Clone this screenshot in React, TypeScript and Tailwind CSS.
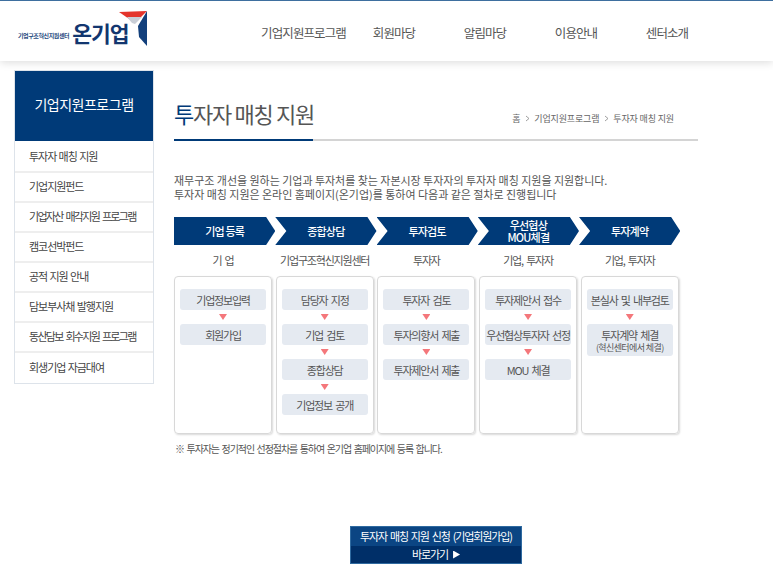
const font = "font-['Noto_Sans_CJK_KR','Liberation_Sans',sans-serif]";

const sideItems = [
  "투자자 매칭 지원",
  "기업지원펀드",
  "기업자산 매각지원 프로그램",
  "캠코선박펀드",
  "공적 지원 안내",
  "담보부사채 발행지원",
  "동산담보 회수지원 프로그램",
  "회생기업 자금대여",
];

const steps = [
  { title: ["기업 등록"], who: "기 업", items: [["기업정보입력"], ["회원가입"]] },
  { title: ["종합상담"], who: "기업구조혁신지원센터", items: [["담당자 지정"], ["기업 검토"], ["종합상담"], ["기업정보 공개"]] },
  { title: ["투자검토"], who: "투자자", items: [["투자자 검토"], ["투자의향서 제출"], ["투자제안서 제출"]] },
  { title: ["우선협상", "MOU체결"], who: "기업, 투자자", items: [["투자제안서 접수"], ["우선협상투자자 선정"], ["MOU 체결"]] },
  { title: ["투자계약"], who: "기업, 투자자", items: [["본실사 및 내부검토"], ["투자계약 체결", "(혁신센터에서 체결)"]] },
];

const Logo = () => (
  <div className="flex items-end ml-[18px] mt-[10px] w-[130px] h-[38px] relative">
    <span className="text-[6px] leading-[8px] font-bold text-[#1f4a80] tracking-[-0.4px] whitespace-nowrap mb-[9px]">기업구조혁신지원센터</span>
    <span className="text-[21.5px] leading-[30px] font-bold text-[#12366f] tracking-[-1px] whitespace-nowrap ml-[3px] mb-[1px]">온기업</span>
    <svg className="absolute left-[100px] top-0" width="30" height="36" viewBox="0 0 30 36">
      <path d="M1 1 L29 0 L17 12 Z" fill="#e4342b" />
      <path d="M9 6 L24 6 L17 13 L14 12 Z" fill="#c9ced6" />
      <path d="M29 0 L29 35 L21 26 L20 15 Z" fill="#13407c" />
    </svg>
  </div>
);

const Header = () => (
  <header className="h-[61px] border-t border-[#3e6f9f] shadow-[0_2px_8px_rgba(0,0,0,0.13)] flex bg-white">
    <Logo />
    <nav className="flex items-center text-[12.5px] text-[#555] tracking-[-0.9px] ml-[113px] pt-[4px]">
      <span className="w-[85px] text-center whitespace-nowrap">기업지원프로그램</span>
      <span className="w-[60px] ml-[18px] text-center">회원마당</span>
      <span className="w-[60px] ml-[31px] text-center">알림마당</span>
      <span className="w-[60px] ml-[31px] text-center">이용안내</span>
      <span className="w-[60px] ml-[31px] text-center">센터소개</span>
    </nav>
  </header>
);

const Sidebar = () => (
  <aside className="w-[140px] shrink-0 border border-[#dde3ea]">
    <div className="h-[70px] bg-[#003a78] text-white text-[14px] tracking-[-0.5px] flex items-center justify-center pb-[3px]">기업지원프로그램</div>
    <ul className="text-[11px] text-[#444] pt-[2px]">
      {sideItems.map((s, i) => (
        <li
          key={s}
          className={`h-[30px] pl-[14px] flex items-center whitespace-nowrap pb-[2px] ${s.length > 12 ? "tracking-[-1.7px] [word-spacing:2px]" : "tracking-[-1.05px] [word-spacing:1px]"} ${i < 7 ? "border-b-2 border-[#eeeeee]" : ""}`}
        >
          {s}
        </li>
      ))}
    </ul>
  </aside>
);

const Arrow = () => (
  <svg width="7" height="7" viewBox="0 0 7 7" fill="none" stroke="#888" strokeWidth="0.8">
    <path d="M2 1 L5 3.5 L2 6" />
  </svg>
);

const Card = ({ items }: { items: string[][] }) => (
  <div className="w-[98px] h-[158px] shrink-0 border border-[#d8d8d8] rounded-[4px] shadow-[1px_1px_2px_rgba(0,0,0,0.15)] px-[5px] pt-[12px]">
    {items.map((lines, i) => (
      <div key={lines[0]}>
        {i > 0 && (
          <div className="h-[14px] flex items-center justify-center">
            <div className="w-[8px] h-[6px] bg-[#f4777b] [clip-path:polygon(0_0,100%_0,50%_100%)]" />
          </div>
        )}
        <div className={`rounded-[3px] bg-[#e5eaf1] text-[#555] text-center flex flex-col items-center justify-center whitespace-nowrap ${lines.length > 1 ? "h-[32px]" : "h-[21px]"}`}>
          <span className="text-[11px] leading-[14px] tracking-[-1.2px] [word-spacing:2px]">{lines[0]}</span>
          {lines[1] && <span className="text-[9px] leading-[11px] tracking-[-0.6px]">{lines[1]}</span>}
        </div>
      </div>
    ))}
  </div>
);

export default function App() {
  return (
    <div className={`${font} bg-white h-[582px] overflow-hidden`}>
      <Header />
      <main className="flex items-start pl-[14px] pt-[9px]">
        <Sidebar />
        <section className="ml-[20px] w-[524px]">
          <div className="h-[71px] border-b-2 border-[#d4d4d4] relative flex items-end justify-between">
            <h1 className="text-[22px] leading-[30px] text-[#555] tracking-[-1.3px] mb-[11px]">
              <span className="text-[#003a78]">투</span>자자 매칭 지원
            </h1>
            <div className="flex items-center text-[9px] tracking-[-0.15px] text-[#666] mr-[24px] mb-[14px] gap-[3.5px]">
              <span>홈</span><Arrow /><span>기업지원프로그램</span><Arrow /><span>투자자 매칭 지원</span>
            </div>
            <div className="absolute left-0 bottom-[-2px] w-[139px] h-[2px] bg-[#003a78]" />
          </div>
          <p className="mt-[32px] text-[11px] leading-[14px] text-[#555] tracking-[-0.03px] whitespace-nowrap">
            재무구조 개선을 원하는 기업과 투자처를 찾는 자본시장 투자자의 투자자 매칭 지원을 지원합니다.
            <br />
            투자자 매칭 지원은 온라인 홈페이지(온기업)를 통하여 다음과 같은 절차로 진행됩니다
          </p>
          <div className="mt-[16px] flex">
            {steps.map((s, i) => (
              <div
                key={s.who + i}
                className={`w-[101.25px] h-[28px] shrink-0 bg-[#003a78] text-white text-[11px] leading-[12px] font-medium tracking-[-0.8px] flex flex-col items-center justify-center ${
                  i === 0
                    ? "[clip-path:polygon(0_0,91%_0,100%_50%,91%_100%,0_100%)]"
                    : "[clip-path:polygon(0_0,91%_0,100%_50%,91%_100%,0_100%,11%_50%)]"
                }`}
              >
                {s.title.map((t) => (
                  <span key={t} className="whitespace-nowrap">{t}</span>
                ))}
              </div>
            ))}
          </div>
          <div className="flex gap-[3.7px]">
            {steps.map((s, i) => (
              <div key={s.who + i} className="w-[98px] shrink-0 h-[31px] pb-[1px] text-[11px] text-[#555] tracking-[-1.2px] [word-spacing:2px] flex items-center justify-center whitespace-nowrap">{s.who}</div>
            ))}
          </div>
          <div className="flex gap-[3.7px]">
            {steps.map((s, i) => (
              <Card key={s.who + i} items={s.items} />
            ))}
          </div>
          <p className="mt-[7px] ml-[1px] text-[10px] leading-[16px] text-[#555] tracking-[-1.1px] [word-spacing:1.5px]">※ 투자자는 정기적인 선정절차를 통하여 온기업 홈페이지에 등록 합니다.</p>
          <div className="flex justify-center mt-[69px]">
            <button className="w-[172px] h-[38px] bg-[#0b4583] border border-[#2f6aa0] text-white text-[11px] tracking-[-1.1px] [word-spacing:1.5px] flex flex-col">
              <span className="h-[19px] leading-[18px] whitespace-nowrap">투자자 매칭 지원 신청 (기업회원가입)</span>
              <span className="h-[17px] w-full leading-[17px] bg-[#002f68] flex items-center justify-center gap-[5px]">
                바로가기
                <span className="w-[7px] h-[8px] bg-white [clip-path:polygon(0_0,100%_50%,0_100%)]" />
              </span>
            </button>
          </div>
        </section>
      </main>
    </div>
  );
}
